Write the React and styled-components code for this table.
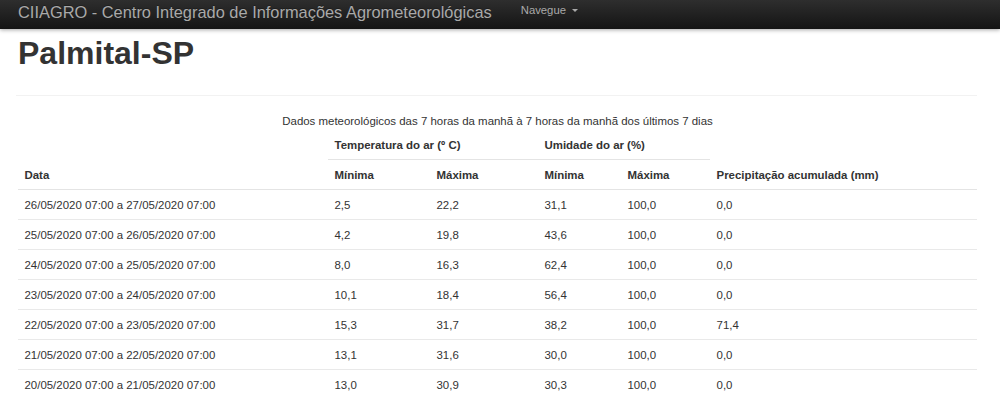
import React from "react";
import styled, { createGlobalStyle } from "styled-components";

const Global = createGlobalStyle`
  html, body { margin: 0; padding: 0; background: #fff; }
  body { font-family: "Liberation Sans", Arial, sans-serif; color: #333; }
`;

const Navbar = styled.nav`
  height: 29px;
  background: linear-gradient(to bottom, #2e2e2e 0%, #141414 100%);
  display: flex;
  align-items: center;
  padding-left: 18px;
  padding-bottom: 5px;
  box-sizing: border-box;
  box-shadow: 0 1px 4px rgba(0, 0, 0, 0.35);
  position: relative;
  z-index: 1;
`;

const Brand = styled.a`
  font-size: 16.4px;
  color: #a9a9a9;
  text-shadow: 0 -1px 0 rgba(0, 0, 0, 0.25);
  white-space: nowrap;
  text-decoration: none;
`;

const NavLink = styled.a`
  margin-left: 29px;
  margin-bottom: 4px;
  font-size: 11.3px;
  color: #a9a9a9;
  display: flex;
  align-items: center;
  gap: 6px;
  text-decoration: none;
`;

const Caret = styled.span`
  display: inline-block;
  width: 0;
  height: 0;
  border-top: 3.5px solid #a9a9a9;
  border-left: 3.5px solid transparent;
  border-right: 3.5px solid transparent;
  margin-top: 1px;
`;

const Container = styled.main`
  padding: 0 23px 0 18px;
`;

const Title = styled.h1`
  margin: 7px 0 0;
  font-size: 32px;
  line-height: 1.1;
  font-weight: 700;
  color: #333;
`;

const Rule = styled.hr`
  border: 0;
  border-top: 1px solid #f2f2f2;
  margin: 24px 0 0 -2px;
`;

const Table = styled.table`
  width: 959px;
  border-collapse: collapse;
  table-layout: fixed;
  font-size: 11.45px;
  line-height: 16px;
  margin-top: 11px;
`;

const Caption = styled.caption`
  padding: 6px 0 1px;
  text-align: center;
  color: #333;
`;

const Th = styled.th`
  text-align: left;
  font-weight: 700;
  vertical-align: bottom;
  padding: 6.5px;
  border-bottom: 1px solid #e4e4e4;
`;

const Td = styled.td`
  padding: 6.5px;
  border-top: 1px solid #e9e9e9;
  vertical-align: top;
`;

const Row = styled.tr``;

const data = [
  ["26/05/2020 07:00 a 27/05/2020 07:00", "2,5", "22,2", "31,1", "100,0", "0,0"],
  ["25/05/2020 07:00 a 26/05/2020 07:00", "4,2", "19,8", "43,6", "100,0", "0,0"],
  ["24/05/2020 07:00 a 25/05/2020 07:00", "8,0", "16,3", "62,4", "100,0", "0,0"],
  ["23/05/2020 07:00 a 24/05/2020 07:00", "10,1", "18,4", "56,4", "100,0", "0,0"],
  ["22/05/2020 07:00 a 23/05/2020 07:00", "15,3", "31,7", "38,2", "100,0", "71,4"],
  ["21/05/2020 07:00 a 22/05/2020 07:00", "13,1", "31,6", "30,0", "100,0", "0,0"],
  ["20/05/2020 07:00 a 21/05/2020 07:00", "13,0", "30,9", "30,3", "100,0", "0,0"],
];

const widths = [310, 102, 108, 83, 89, 267];

export default function App() {
  return (
    <>
      <Global />
      <Navbar>
        <Brand>CIIAGRO - Centro Integrado de Informações Agrometeorológicas</Brand>
        <NavLink>
          Navegue <Caret />
        </NavLink>
      </Navbar>
      <Container>
        <Title>Palmital-SP</Title>
        <Rule />
        <Table>
          <Caption>
            Dados meteorológicos das 7 horas da manhã à 7 horas da manhã dos últimos 7 dias
          </Caption>
          <colgroup>
            {widths.map((w, i) => (
              <col key={i} style={{ width: w }} />
            ))}
          </colgroup>
          <thead>
            <Row>
              <Th rowSpan={2}>Data</Th>
              <Th colSpan={2}>Temperatura do ar (º C)</Th>
              <Th colSpan={2}>Umidade do ar (%)</Th>
              <Th rowSpan={2}>Precipitação acumulada (mm)</Th>
            </Row>
            <Row>
              <Th>Mínima</Th>
              <Th>Máxima</Th>
              <Th>Mínima</Th>
              <Th>Máxima</Th>
            </Row>
          </thead>
          <tbody>
            {data.map((r, i) => (
              <Row key={i}>
                {r.map((c, j) => (
                  <Td key={j}>{c}</Td>
                ))}
              </Row>
            ))}
          </tbody>
        </Table>
      </Container>
    </>
  );
}
